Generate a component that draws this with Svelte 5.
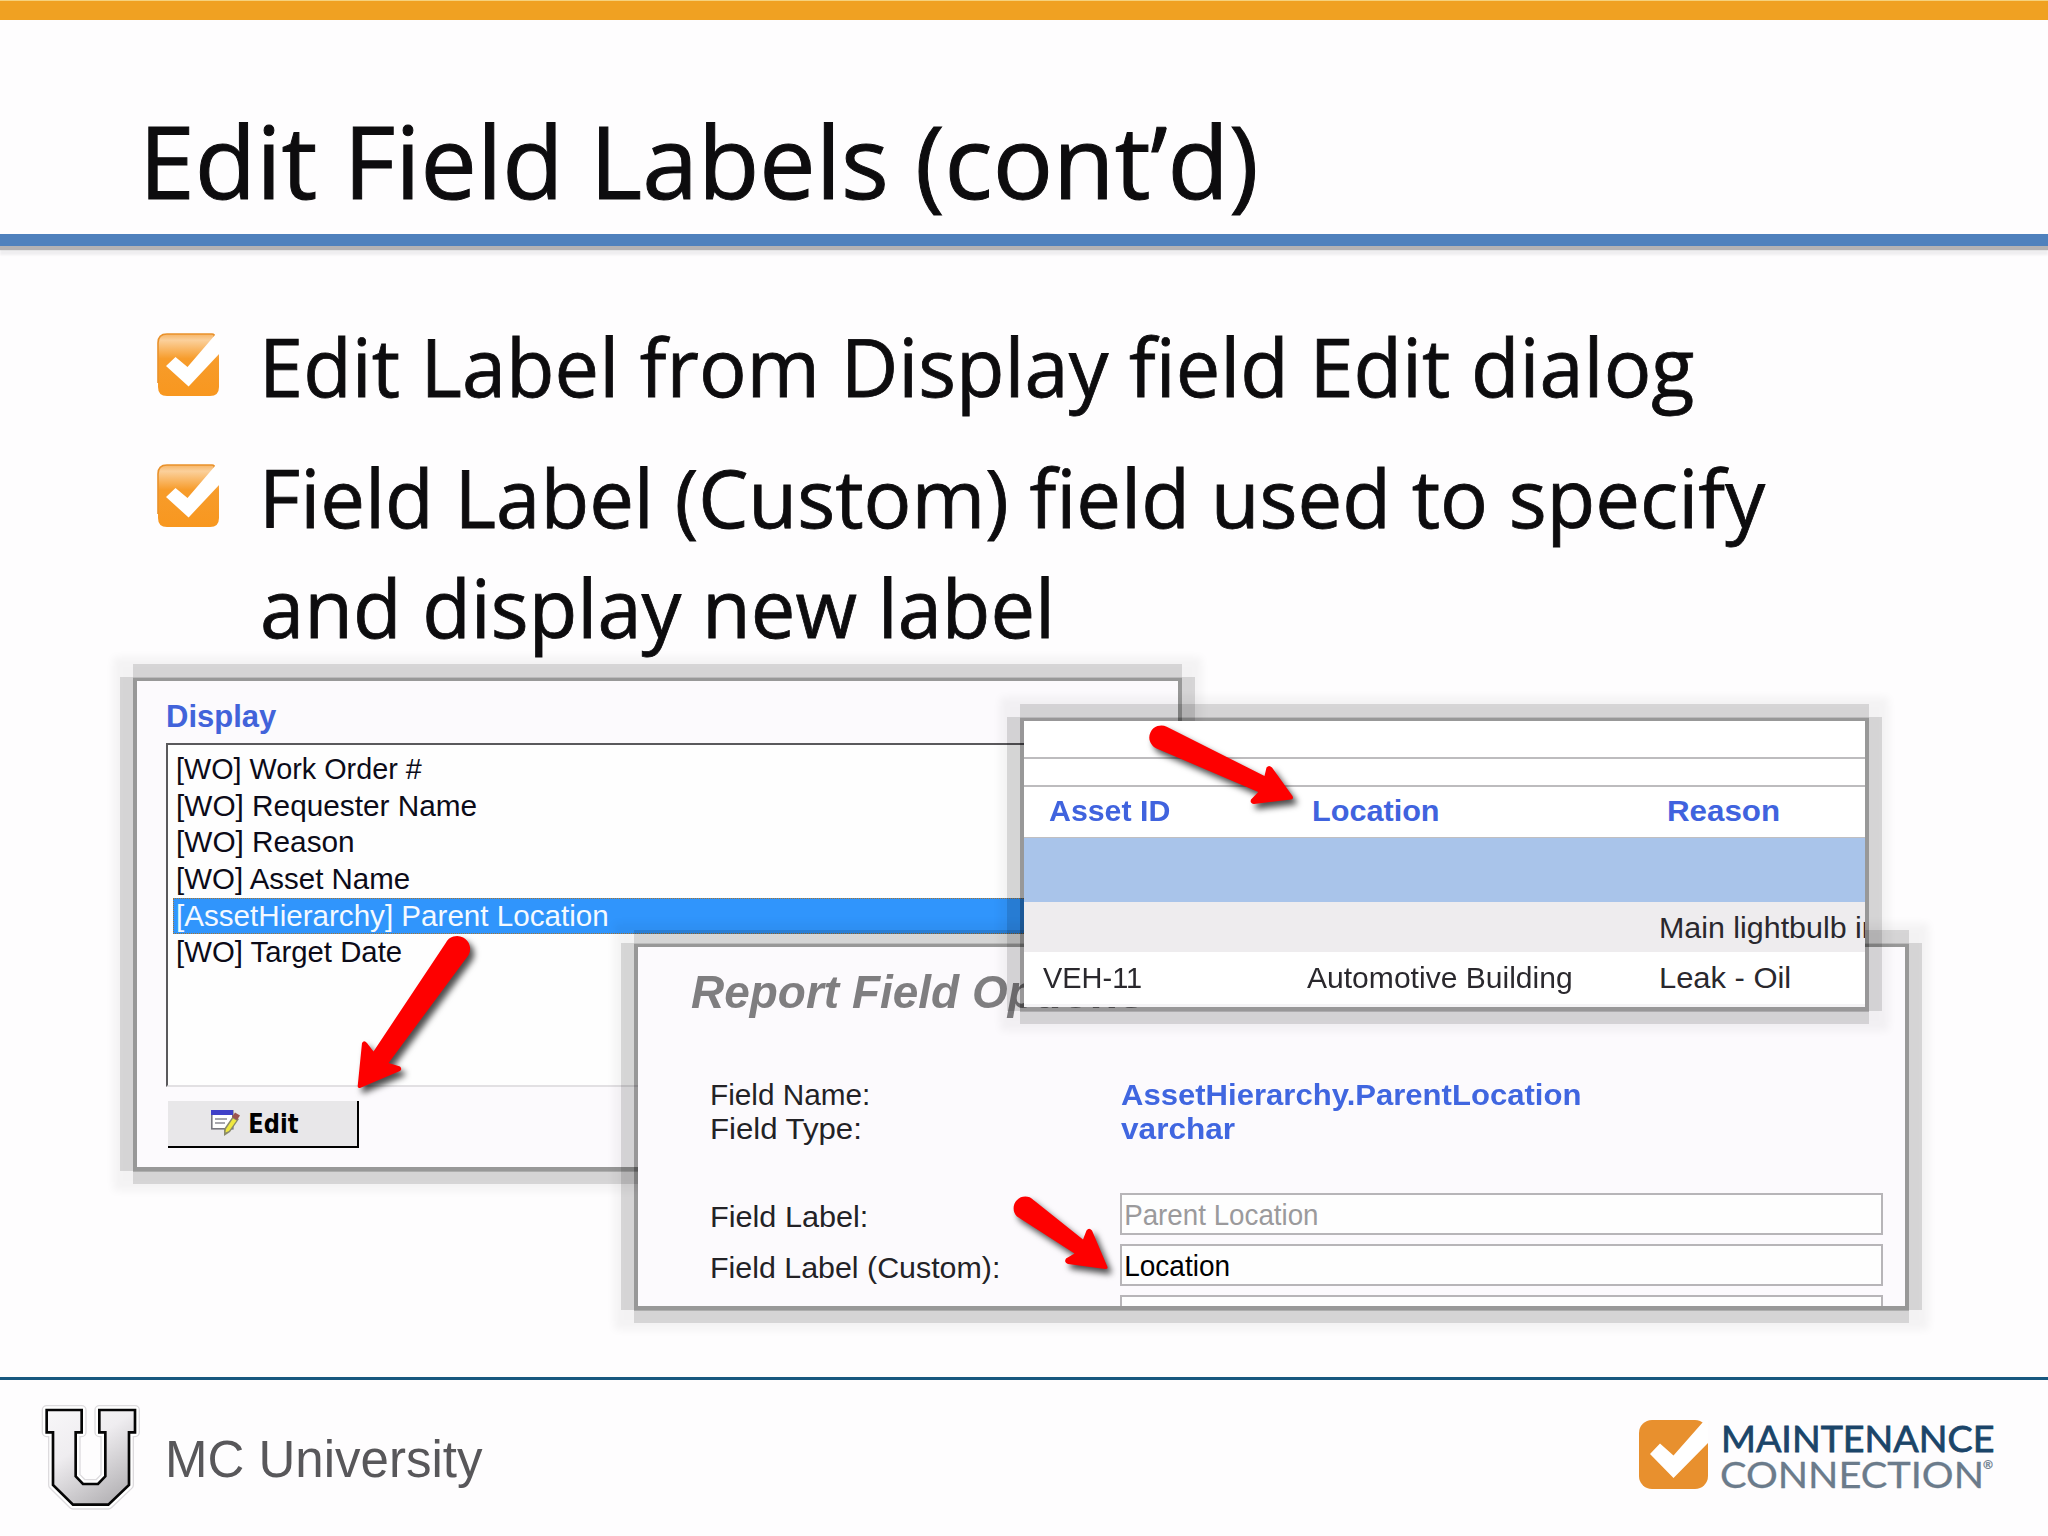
<script>
  const bullets = [
    [{ text: 'Edit Label from Display field Edit dialog', left: 0, width: 1427 }],
    [
      { text: 'Field Label (Custom) field used to specify', left: 0, width: 1500 },
      { text: 'and display new label', left: -3, width: 786 }
    ]
  ];

  const displayFields = [
    { text: '[WO] Work Order #', width: 244 },
    { text: '[WO] Requester Name', width: 298.5 },
    { text: '[WO] Reason', width: 175 },
    { text: '[WO] Asset Name', width: 233 },
    { text: '[AssetHierarchy] Parent Location', width: 429, selected: true },
    { text: '[WO] Target Date', width: 224 }
  ];

  const arrows = [
    'M445.7 942.9 A12 12 0 0 1 468.6 955 L388.6 1063 L400 1066.5 Q402.500 1069 400 1071 L360 1088 Q357.500 1088.500 357.700 1086 L362 1043 Q364 1039.500 367 1043 L373.500 1051.500 Z',
    'M1166.7 726.7 L1264.5 776 L1266.500 767.500 Q1269 764.500 1272 767.500 L1292.500 796 Q1294 799 1291 799.500 L1254 804 Q1249.500 803.500 1251 799.500 L1258.3 792 L1156 748.3 A11.500 11.500 0 0 1 1166.7 726.7 Z',
    'M1033.500 1200 L1083 1239.500 L1086.500 1230.500 Q1089 1227 1092 1230.500 L1107.500 1267 Q1108 1269 1105 1269 L1068 1264 Q1063.500 1262 1066 1258.500 L1074.500 1253.500 L1017 1216.500 A11.500 11.500 0 0 1 1033.500 1200 Z'
  ];

  // Stretches a line of text so its ink fills exactly the given width.
  function fit(node, width) {
    const style = getComputedStyle(node);
    const ctx = document.createElement('canvas').getContext('2d');
    ctx.font = `${style.fontStyle} ${style.fontWeight} ${style.fontSize} ${style.fontFamily}`;
    const m = ctx.measureText(node.textContent);
    const ink = m.actualBoundingBoxLeft + m.actualBoundingBoxRight;
    const scale = width / ink;
    node.style.transform = `scaleX(${scale}) translateX(${m.actualBoundingBoxLeft}px)`;
  }
</script>

{#snippet line(text, width)}
  <span class="line" style:width="{width}px"><span class="glyphs" use:fit={width}>{text}</span></span>
{/snippet}

{#snippet checkbox()}
  <svg class="checkbox" viewBox="0 0 63 64">
    <defs>
      <linearGradient id="gloss" x1="0" y1="0" x2="0" y2="1">
        <stop offset="0" stop-color="#f7b566" />
        <stop offset="0.1" stop-color="#fbd09b" />
        <stop offset="0.4" stop-color="#f79c2b" />
        <stop offset="1" stop-color="#f8971f" />
      </linearGradient>
    </defs>
    <path d="M10 1H55Q58 1 58 3L46 24L62 20V54Q62 63 53 63H10Q1 63 1 54V10Q1 1 10 1Z" fill="url(#gloss)" />
    <path d="M1 50V10Q1 1 10 1H55Q58 1 57 4" fill="none" stroke="#e9912b" stroke-width="1.6" />
    <path d="M9 33L18.500 24L30.500 34L58 2L63 1V20L31.600 53.500Z" fill="#fff" />
  </svg>
{/snippet}

<main class="slide">
  <div class="top-bar"></div>
  <header>
    <h1>{@render line('Edit Field Labels (cont’d)', 1107)}</h1>
  </header>
  <div class="rule"></div>

  <ul class="bullets">
    {#each bullets as lines}
      <li>
        {@render checkbox()}
        <div class="copy">
          {#each lines as l}
            <p style:margin-left="{l.left}px">{@render line(l.text, l.width)}</p>
          {/each}
        </div>
      </li>
    {/each}
  </ul>

  <footer>
    <div class="university">
      <svg class="u-logo" viewBox="118 125 312 336">
        <defs>
          <linearGradient id="silver" x1="0" y1="0" x2="0.6" y2="1">
            <stop offset="0" stop-color="#f8f7f9" />
            <stop offset="0.45" stop-color="#efedf0" />
            <stop offset="1" stop-color="#b9b7ba" />
          </linearGradient>
        </defs>
        <g stroke-linejoin="round">
          {#each [['#dddbde', 30], ['#fff', 22]] as [color, w]}
            <path d="M141 149H246V216H228V348L250 371H295L317 348V216H299V149H406V216H388V374L326 433H220L160 374V216H141Z" fill="none" stroke={color} stroke-width={w} />
          {/each}
        </g>
        <path d="M141 149H246V216H228V348L250 371H295L317 348V216H299V149H406V216H388V374L326 433H220L160 374V216H141Z" fill="url(#silver)" stroke="#050505" stroke-width="8" />
      </svg>
      <span class="u-name">{@render line('MC University', 314)}</span>
    </div>
    <div class="brand">
      <svg class="brand-mark" viewBox="0 0 69 69">
        <rect width="69" height="69" rx="13" fill="#e8902e" />
        <path d="M11 34L21 23.500L34.500 35.500L64 2L70 -1V22L34.500 58Z" fill="#fff" />
      </svg>
      <div class="brand-name">
        <div class="maintenance">{@render line('MAINTENANCE', 269)}</div>
        <div class="connection">{@render line('CONNECTION', 259.5)}<sup>®</sup></div>
      </div>
    </div>
  </footer>

  <section class="panel display">
    <div class="body">
      <h2>{@render line('Display', 108.5)}</h2>
      <div class="listbox">
        {#each displayFields as f}
          <div class="item" class:selected={f.selected}>{@render line(f.text, f.width)}</div>
        {/each}
      </div>
      <div class="edit">
        <svg class="edit-icon" viewBox="0 0 29 27">
          <rect x="0.800" y="0.800" width="21" height="18" fill="#fff" stroke="#77777f" stroke-width="1.600" />
          <rect x="0" y="0" width="22" height="5" fill="#3f40c8" />
          <path d="M4 9H16M4 13H14" stroke="#8b8b93" stroke-width="1.700" />
          <path d="M13 26V19L22 6L28 9L19 22Z" fill="#8a8a6a" />
          <path d="M14.500 22.500L15 19L22 8.500L25.500 10.500L18 21Z" fill="#f0e840" />
          <path d="M21 7L24 2.500L29 5.500L26 10Z" fill="#9b5350" />
        </svg>
        {@render line('Edit', 48.5)}
      </div>
    </div>
  </section>

  <section class="panel options">
    <div class="body">
      <h2>{@render line('Report Field Options', 454)}</h2>
      <dl>
        <dt>{@render line('Field Name:', 156)}</dt>
        <dd>{@render line('AssetHierarchy.ParentLocation', 459)}</dd>
        <dt>{@render line('Field Type:', 148)}</dt>
        <dd>{@render line('varchar', 114.5)}</dd>
      </dl>
      <div class="form">
        <span>{@render line('Field Label:', 154)}</span>
        <div class="input muted">{@render line('Parent Location', 191)}</div>
        <span>{@render line('Field Label (Custom):', 286)}</span>
        <div class="input">{@render line('Location', 102.5)}</div>
        <span></span>
        <div class="input"></div>
      </div>
    </div>
  </section>

  <section class="panel report">
    <div class="body">
      <div class="blank first"></div>
      <div class="blank second"></div>
      <div class="row head">
        <span>{@render line('Asset ID', 121)}</span>
        <span>{@render line('Location', 125.5)}</span>
        <span>{@render line('Reason', 111)}</span>
      </div>
      <div class="group"></div>
      <div class="row alt">
        <span></span><span></span>
        <span>{@render line('Main lightbulb in', 216)}</span>
      </div>
      <div class="row last">
        <span>{@render line('VEH-11', 98.5)}</span>
        <span>{@render line('Automotive Building', 264)}</span>
        <span>{@render line('Leak - Oil', 128.5)}</span>
      </div>
    </div>
  </section>

  <svg class="arrows" viewBox="0 0 2048 1536">
    {#each arrows as d}
      <path {d} />
    {/each}
  </svg>
</main>

<style>
  :global(body) { background: #fefdfe; }
  .slide {
    position: relative;
    width: 2048px;
    height: 1536px;
    overflow: hidden;
    display: flex;
    flex-direction: column;
    background: #fefdfe;
    font-family: 'Liberation Sans', Arial, sans-serif;
    color: #0d0c0e;
  }
  .line { display: inline-block; white-space: nowrap; text-align: left; vertical-align: top; }
  .glyphs { display: inline-block; transform-origin: 0 50%; vertical-align: top; }
  h1, h2, p, ul, dl, dd { margin: 0; padding: 0; }

  .top-bar { height: 20px; flex: none; background: #f0a122; border-top: 1px solid #f6d27c; box-sizing: border-box; }
  header { height: 214px; flex: none; padding-left: 148px; box-sizing: border-box; }
  h1 { font: 400 100px/280px 'Open Sans', sans-serif; height: 214px; -webkit-text-stroke: 1px #0d0c0e; }
  .rule { height: 12px; flex: none; background: #4f81bd; box-shadow: 0 4px 1px #b3b2b4, 0 9px 2px #efeef0; }

  .bullets { list-style: none; padding: 87px 0 0 157px; flex: 1; }
  li { display: flex; gap: 46px; margin-bottom: 43.500px; }
  .checkbox { width: 63px; height: 64px; flex: none; }
  .copy { font: 400 80px/109.500px 'Open Sans', sans-serif; margin-top: -22px; -webkit-text-stroke: 0.800px #0d0c0e; }
  p { height: 109.500px; }

  footer {
    height: 159px;
    flex: none;
    box-sizing: border-box;
    border-top: 3px solid #17587f;
    display: flex;
    justify-content: space-between;
    padding: 0 55px 0 39px;
  }
  .university { display: flex; padding-top: 22px; }
  .u-logo { width: 104px; height: 112px; }
  .u-name { font-size: 51px; line-height: 58px; color: #58575a; padding: 29px 0 0 25.500px; }
  .brand { display: flex; padding-top: 40px; gap: 14px; }
  .brand-mark { width: 69px; height: 69px; }
  .brand-name { font: 400 37px/35.500px Lato, sans-serif; width: 271px; }
  .maintenance { color: #1b4569; padding-left: 1.500px; height: 35.500px; -webkit-text-stroke: 0.800px #1b4569; }
  .connection { color: #6b7b8b; display: flex; margin-left: -1px; -webkit-text-stroke: 0.300px #6b7b8b; }
  .connection sup { font-size: 12px; line-height: 14px; padding: 2px 0 0 3px; }

  .panel { position: absolute; box-shadow: 0 1px 0 4px rgba(0, 0, 0, 0.180), 0 0 8px 24px rgba(0, 0, 0, 0.045); }
  .panel::before, .panel::after { content: ''; position: absolute; z-index: -1; background: rgba(0, 0, 0, 0.120); }
  .panel::before { inset: -17px -4px; }
  .panel::after { inset: -4px -17px; }
  .panel .body { width: 100%; height: 100%; overflow: hidden; background: #fcfafd; box-sizing: border-box; }

  .display { left: 137px; top: 681px; width: 1041px; height: 485.500px; z-index: 1; }
  .display .body { padding-left: 29px; }
  .display h2 { height: 62px; font-size: 32px; line-height: 70px; color: #4263da; padding-left: 2px; }
  .listbox {
    height: 344px;
    box-sizing: border-box;
    background: #fefefe;
    border: solid #5a595c;
    border-width: 2px 0 0 2px;
    border-bottom: 2px solid #e2e0e3;
    padding: 6px 0 0 5px;
    font-size: 30px;
    line-height: 36px;
    color: #0c0b18;
  }
  .item { height: 36.700px; padding-left: 5px; }
  .selected { background: #3095fc; color: #f4f9ff; outline: 1.500px dotted #a8742e; outline-offset: -1px; }
  .edit {
    margin: 14px 0 0 2px;
    width: 191px;
    height: 47px;
    box-sizing: border-box;
    background: #e8e7e9;
    border: solid #000;
    border-width: 0 2.500px 2.500px 0;
    display: flex;
    gap: 10px;
    padding: 9px 0 0 43px;
    font: 700 27px/27px 'DejaVu Sans', sans-serif;
    color: #000;
  }
  .edit-icon { width: 29px; height: 27px; }

  .options { left: 638px; top: 946.500px; width: 1267px; height: 359.500px; z-index: 2; }
  .options h2 { height: 128px; padding-left: 53px; font-size: 46px; font-style: italic; line-height: 91px; color: #7f7e80; }
  dl { display: grid; grid-template-columns: 409px 1fr; grid-auto-rows: 34px; padding-left: 74px; font-size: 30px; line-height: 39px; color: #232226; height: 118px; box-sizing: border-box; }
  dd { font-weight: 700; color: #4066e0; }
  .form { display: grid; grid-template-columns: 408px 763px; grid-auto-rows: 42px; row-gap: 9px; padding-left: 74px; font-size: 30px; line-height: 47px; color: #232226; }
  .input { border: 2px solid #b7b5b8; background: #fefefe; box-sizing: border-box; padding-left: 4px; line-height: 39px; color: #000; }
  .muted { color: #9b9a9c; }

  .report { left: 1024px; top: 721px; width: 841px; height: 286px; z-index: 3; }
  .report .body { background: #fff; display: flex; flex-direction: column; font-size: 30px; color: #2a282d; }
  .blank { border-bottom: 2px solid #bdbcbe; box-sizing: border-box; flex: none; }
  .first { height: 38px; }
  .second { height: 28px; }
  .row { display: grid; grid-template-columns: 264px 354px 1fr; flex: none; padding-left: 19px; }
  .head { height: 50px; line-height: 47px; font-size: 29.500px; font-weight: 700; color: #4063de; padding-left: 25px; grid-template-columns: 263.500px 355px 1fr; }
  .group { height: 65px; flex: none; background: #a9c4ea; border-top: 1.500px solid #c0bfc1; box-sizing: border-box; }
  .alt { height: 50px; line-height: 52px; background: #eeecee; }
  .last { height: 55px; line-height: 51px; box-sizing: border-box; border-bottom: 3px solid #f4f3f5; }

  .arrows { position: absolute; inset: 0; width: 2048px; height: 1536px; z-index: 4; fill: #fe0000; filter: drop-shadow(4px 5px 3px rgba(0, 0, 0, 0.700)); }
</style>
